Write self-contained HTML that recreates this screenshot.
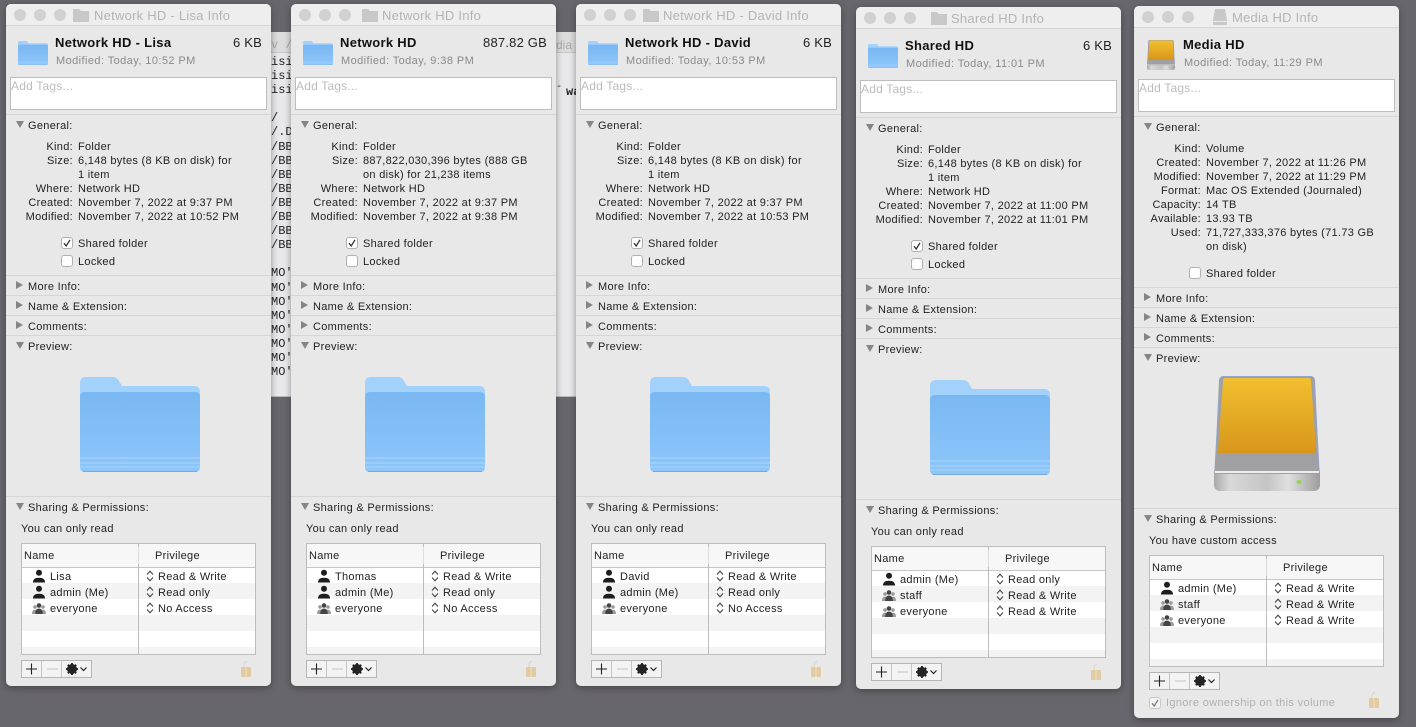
<!DOCTYPE html>
<html><head><meta charset="utf-8"><style>
html,body{margin:0;padding:0}
body{width:1416px;height:727px;overflow:hidden;position:relative;background:#67666c;font-family:"Liberation Sans",sans-serif;color:#222;filter:blur(.3px)}
.w{position:absolute;width:265px;background:#e9e8e9;border-radius:5px;box-shadow:0 2px 7px rgba(30,30,35,.45)}
.bar{position:absolute;left:0;top:0;width:265px;height:21px;background:#eeeeee;border-bottom:1px solid #d5d5d5;border-radius:5px 5px 0 0}
.d{position:absolute;top:5px;width:12px;height:12px;border-radius:50%;background:#d1d1d1}
.t{position:absolute;line-height:14px;font-size:11px;white-space:nowrap;letter-spacing:.3px;margin-top:1px}
.ti{font-size:13px;color:#b4b4b4;top:4px;letter-spacing:.25px}
.n{font-size:13px;font-weight:bold;color:#111;left:49px;top:31px;letter-spacing:.3px}
.s{font-size:13px;color:#222;right:9px;top:31px;letter-spacing:.2px}
.m{color:#8a8a8a;left:50px;top:49px;letter-spacing:.42px}
.tg{position:absolute;left:4px;top:73px;width:255px;height:31px;background:#fff;border:1px solid #bdbdbd}
.at{font-size:12px;color:#bcbcbc;left:5px;letter-spacing:.2px}
.l{left:0;width:67px;text-align:right}
.v{left:72px}
.h{left:22px}
.hr{position:absolute;left:0;width:265px;height:1px;background:#d6d6d6}
.c{position:absolute;left:55px;width:10px;height:10px;background:#fff;border:1px solid #b0b0b0;border-radius:3px}
.c svg{position:absolute;left:1px;top:1px}
.dn,.rt{position:absolute;width:0;height:0}
.dn{left:10px;border-left:4.5px solid transparent;border-right:4.5px solid transparent;border-top:7px solid #858585}
.rt{left:10px;border-top:4.5px solid transparent;border-bottom:4.5px solid transparent;border-left:7px solid #858585}
.tb{position:absolute;left:15px;width:233px;height:110px;border:1px solid #bdbdbd;background:repeating-linear-gradient(#fff 0,#fff 16px,#f3f3f3 16px,#f3f3f3 32px) 0 23px no-repeat;background-size:100% 87px;overflow:hidden}
.th{position:absolute;left:0;top:0;width:233px;height:23px;background:#f7f7f7;border-bottom:1px solid #c6c6c6}
.cd{position:absolute;left:116px;top:0;width:1px;height:110px;background:#bdbdbd}
.cd2{position:absolute;left:116px;top:3px;width:1px;height:17px;background:#ddd}
.tb svg{position:absolute}
.bt{position:absolute;left:15px;width:69px;height:16px;border:1px solid #b5b5b5;background:#f3f3f3}
.bt i{position:absolute;top:0;width:1px;height:16px;background:#c4c4c4}
.bt svg{position:absolute;left:0;top:0}
.lk{position:absolute;left:234px}
.mo{position:absolute;font-family:"Liberation Mono",monospace;font-size:12px;line-height:14.1px;color:#222;white-space:pre}
svg{display:block;overflow:visible}
</style></head><body>
<svg width="0" height="0" style="position:absolute"><defs>
<linearGradient id="fg" x1="0" y1="0" x2="0" y2="1"><stop offset="0" stop-color="#7ab8f2"/><stop offset="1" stop-color="#8dc6fb"/></linearGradient>
<linearGradient id="yg" x1="0" y1="0" x2="0" y2="1"><stop offset="0" stop-color="#f1bf2f"/><stop offset="1" stop-color="#d8961b"/></linearGradient>
<linearGradient id="sg" x1="0" y1="0" x2="1" y2="0"><stop offset="0" stop-color="#a9a9a9"/><stop offset=".15" stop-color="#d9d9d9"/><stop offset=".5" stop-color="#c4c4c4"/><stop offset=".7" stop-color="#dfdfdf"/><stop offset="1" stop-color="#9d9d9d"/></linearGradient>
<symbol id="folder" viewBox="0 0 120 95" preserveAspectRatio="none">
<path d="M0 6Q0 0 6 0H33Q37 0 39 4L42 9H114Q120 9 120 15V30H0Z" fill="#a2d1fc"/>
<path d="M0 20Q0 15 5 15H115Q120 15 120 20V90Q120 95 115 95H5Q0 95 0 90Z" fill="url(#fg)"/>
<path d="M0 81H120M0 86H120M0 90H120" stroke="#a4d2fb" stroke-width="1.2"/>
<path d="M3 94.5H117" stroke="#7aa9d4" stroke-width="1"/>
</symbol>
<symbol id="drive" viewBox="0 0 106 116" preserveAspectRatio="none">
<path d="M9 0H97Q100 0 101 4L105 90Q106 96 106 98V108Q106 115 99 115H7Q0 115 0 108V98Q0 96 1 90L5 4Q6 0 9 0Z" fill="#a0a0a2"/>
<path d="M10 .5H96Q99 .5 100 4L105 93M10 .5Q7 .5 6 4L1 93" fill="none" stroke="#93a5c8" stroke-width="1"/>
<path d="M11 2H95Q97 2 97 5L102 74Q102 77 99 77H6Q3 77 4 74L9 5Q9 2 11 2Z" fill="url(#yg)"/>
<path d="M0 96Q1 98 5 98H101Q105 98 106 96V108Q106 115 99 115H7Q0 115 0 108Z" fill="url(#sg)"/>
<path d="M1 96H105" stroke="#eeeeee" stroke-width="2"/>
<ellipse cx="85" cy="106" rx="2.5" ry="2" fill="#8fd64f"/>
</symbol>
<symbol id="p" viewBox="0 0 14 14"><circle cx="7" cy="3.8" r="3" fill="#1e1e1e"/><path d="M1 13.5Q1 8.8 7 8.8Q13 8.8 13 13.5Z" fill="#1e1e1e"/></symbol>
<symbol id="g" viewBox="0 0 14 14"><circle cx="3" cy="6" r="1.8" fill="#9a9a9a"/><circle cx="11" cy="6" r="1.8" fill="#9a9a9a"/><path d="M0 13Q0 8.6 3 8.6Q6 8.6 6 13ZM8 13Q8 8.6 11 8.6Q14 8.6 14 13Z" fill="#9a9a9a"/><circle cx="7" cy="4.5" r="2.3" fill="#444"/><path d="M3.2 13Q3.2 7.5 7 7.5Q10.8 7.5 10.8 13Z" fill="#444"/></symbol>
<symbol id="st" viewBox="0 0 8 12"><path d="M1 4.5L4 1.2L7 4.5M1 7.5L4 10.8L7 7.5" fill="none" stroke="#444" stroke-width="1.1"/></symbol>
<symbol id="btn" viewBox="0 0 70 16">
<path d="M4 8H15M9.5 2.5V13.5" stroke="#222" stroke-width="1.1"/><path d="M25 8H36" stroke="#c9c9c9" stroke-width="1.1"/>
<circle cx="50" cy="8" r="3.8" fill="none" stroke="#222" stroke-width="2.4"/>
<path d="M50 2V14M44 8H56M45.8 3.8L54.2 12.2M54.2 3.8L45.8 12.2" stroke="#222" stroke-width="1.8"/>
<path d="M58.5 6.5L61.5 9.5L64.5 6.5" fill="none" stroke="#222" stroke-width="1.2"/>
</symbol>
<symbol id="lock" viewBox="0 0 13 18"><path d="M4 7V4.5Q4 2 7 1.5" fill="none" stroke="#d9d4cc" stroke-width="1"/><rect x="1" y="7" width="10" height="10" rx="1" fill="#e2cba3"/><rect x="5.5" y="7" width="1" height="10" fill="#efe0c3"/></symbol>
<symbol id="ck" viewBox="0 0 8 8"><path d="M1 4.2L3.2 7L7 .8" fill="none" stroke="#333" stroke-width="1.3"/></symbol>
</defs></svg>

<div style="position:absolute;left:262px;top:32px;width:320px;height:365px;background:#e8e8ea;border:1px solid #bbb;box-sizing:border-box"></div>
<div style="position:absolute;left:262px;top:32px;width:320px;height:21px;background:#dcdcdd;border-bottom:1px solid #c8c8c8;box-sizing:border-box"></div>
<div class="mo" style="left:271px;top:38px;color:#aaa;overflow:hidden;width:20px">v /V</div>
<div class="mo" style="left:556px;top:38px;color:#aaa;overflow:hidden;width:20px;font-family:'Liberation Sans',sans-serif">dia</div>
<div class="mo" style="left:271px;top:55px;overflow:hidden;width:20px">isi
isi
isi

/
/.D
/BB
/BB
/BB
/BB
/BB
/BB
/BB
/BB

MO'
MO'
MO'
MO'
MO'
MO'
MO'
MO'</div>
<div class="mo" style="left:556px;top:81px;font-size:10px">-</div>
<div class="mo" style="left:566px;top:85px;overflow:hidden;width:10px;font-weight:bold">wa</div>

<!-- Window 1 -->
<div class="w" style="left:6px;top:4px;height:682px">
<div class="bar"></div><div class="d" style="left:8px"></div><div class="d" style="left:28px"></div><div class="d" style="left:48px"></div>
<svg style="position:absolute;left:67px;top:4px" width="16" height="14"><path d="M0 1H6L8 3H16V14H0Z" fill="#c8c8c8"/></svg>
<div class="t ti" style="left:88px">Network HD - Lisa Info</div>
<svg style="position:absolute;left:12px;top:37px" width="30" height="24"><use href="#folder" width="30" height="24"/></svg>
<div class="t n">Network HD - Lisa</div><div class="t s">6 KB</div><div class="t m">Modified: Today, 10:52 PM</div>
<div class="tg"></div><div class="t at" style="top:74px">Add Tags...</div>
<div class="hr" style="top:110px"></div><div class="dn" style="top:117px"></div><div class="t h" style="top:114px">General:</div>
<div class="t l" style="top:135px">Kind:</div><div class="t v" style="top:135px">Folder</div>
<div class="t l" style="top:149px">Size:</div><div class="t v" style="top:149px">6,148 bytes (8 KB on disk) for</div><div class="t v" style="top:163px">1 item</div>
<div class="t l" style="top:177px">Where:</div><div class="t v" style="top:177px">Network HD</div>
<div class="t l" style="top:191px">Created:</div><div class="t v" style="top:191px">November 7, 2022 at 9:37 PM</div>
<div class="t l" style="top:205px">Modified:</div><div class="t v" style="top:205px">November 7, 2022 at 10:52 PM</div>
<div class="c" style="top:233px"><svg width="8" height="8"><use href="#ck" width="8" height="8"/></svg></div><div class="t v" style="top:232px">Shared folder</div>
<div class="c" style="top:251px"></div><div class="t v" style="top:250px">Locked</div>
<div class="hr" style="top:271px"></div><div class="rt" style="top:277px"></div><div class="t h" style="top:275px">More Info:</div>
<div class="hr" style="top:291px"></div><div class="rt" style="top:297px"></div><div class="t h" style="top:295px">Name &amp; Extension:</div>
<div class="hr" style="top:311px"></div><div class="rt" style="top:317px"></div><div class="t h" style="top:315px">Comments:</div>
<div class="hr" style="top:331px"></div><div class="dn" style="top:338px"></div><div class="t h" style="top:335px">Preview:</div>
<svg style="position:absolute;left:74px;top:373px" width="120" height="95"><use href="#folder" width="120" height="95"/></svg>
<div class="hr" style="top:492px"></div><div class="dn" style="top:499px"></div><div class="t h" style="top:496px">Sharing &amp; Permissions:</div>
<div class="t" style="left:15px;top:517px">You can only read</div>
<div class="tb" style="top:539px"><div class="th"></div><div class="cd"></div><div class="cd2"></div>
<div class="t" style="left:2px;top:4px">Name</div><div class="t" style="left:133px;top:4px">Privilege</div>
<svg style="left:10px;top:25px" width="14" height="14"><use href="#p" width="14" height="14"/></svg><div class="t" style="left:28px;top:25px">Lisa</div><svg style="left:124px;top:26px" width="8" height="12"><use href="#st" width="8" height="12"/></svg><div class="t" style="left:136px;top:25px">Read &amp; Write</div>
<svg style="left:10px;top:41px" width="14" height="14"><use href="#p" width="14" height="14"/></svg><div class="t" style="left:28px;top:41px">admin (Me)</div><svg style="left:124px;top:42px" width="8" height="12"><use href="#st" width="8" height="12"/></svg><div class="t" style="left:136px;top:41px">Read only</div>
<svg style="left:10px;top:57px" width="14" height="14"><use href="#g" width="14" height="14"/></svg><div class="t" style="left:28px;top:57px">everyone</div><svg style="left:124px;top:58px" width="8" height="12"><use href="#st" width="8" height="12"/></svg><div class="t" style="left:136px;top:57px">No Access</div>
</div>
<div class="bt" style="top:656px"><i style="left:19px"></i><i style="left:39px"></i><svg width="70" height="16"><use href="#btn" width="70" height="16"/></svg></div>
<svg class="lk" style="top:656px" width="13" height="18"><use href="#lock" width="13" height="18"/></svg>
</div>

<!-- Window 2 -->
<div class="w" style="left:291px;top:4px;height:682px">
<div class="bar"></div><div class="d" style="left:8px"></div><div class="d" style="left:28px"></div><div class="d" style="left:48px"></div>
<svg style="position:absolute;left:71px;top:4px" width="16" height="14"><path d="M0 1H6L8 3H16V14H0Z" fill="#c8c8c8"/></svg>
<div class="t ti" style="left:91px">Network HD Info</div>
<svg style="position:absolute;left:12px;top:37px" width="30" height="24"><use href="#folder" width="30" height="24"/></svg>
<div class="t n">Network HD</div><div class="t s">887.82 GB</div><div class="t m">Modified: Today, 9:38 PM</div>
<div class="tg"></div><div class="t at" style="top:74px">Add Tags...</div>
<div class="hr" style="top:110px"></div><div class="dn" style="top:117px"></div><div class="t h" style="top:114px">General:</div>
<div class="t l" style="top:135px">Kind:</div><div class="t v" style="top:135px">Folder</div>
<div class="t l" style="top:149px">Size:</div><div class="t v" style="top:149px">887,822,030,396 bytes (888 GB</div><div class="t v" style="top:163px">on disk) for 21,238 items</div>
<div class="t l" style="top:177px">Where:</div><div class="t v" style="top:177px">Network HD</div>
<div class="t l" style="top:191px">Created:</div><div class="t v" style="top:191px">November 7, 2022 at 9:37 PM</div>
<div class="t l" style="top:205px">Modified:</div><div class="t v" style="top:205px">November 7, 2022 at 9:38 PM</div>
<div class="c" style="top:233px"><svg width="8" height="8"><use href="#ck" width="8" height="8"/></svg></div><div class="t v" style="top:232px">Shared folder</div>
<div class="c" style="top:251px"></div><div class="t v" style="top:250px">Locked</div>
<div class="hr" style="top:271px"></div><div class="rt" style="top:277px"></div><div class="t h" style="top:275px">More Info:</div>
<div class="hr" style="top:291px"></div><div class="rt" style="top:297px"></div><div class="t h" style="top:295px">Name &amp; Extension:</div>
<div class="hr" style="top:311px"></div><div class="rt" style="top:317px"></div><div class="t h" style="top:315px">Comments:</div>
<div class="hr" style="top:331px"></div><div class="dn" style="top:338px"></div><div class="t h" style="top:335px">Preview:</div>
<svg style="position:absolute;left:74px;top:373px" width="120" height="95"><use href="#folder" width="120" height="95"/></svg>
<div class="hr" style="top:492px"></div><div class="dn" style="top:499px"></div><div class="t h" style="top:496px">Sharing &amp; Permissions:</div>
<div class="t" style="left:15px;top:517px">You can only read</div>
<div class="tb" style="top:539px"><div class="th"></div><div class="cd"></div><div class="cd2"></div>
<div class="t" style="left:2px;top:4px">Name</div><div class="t" style="left:133px;top:4px">Privilege</div>
<svg style="left:10px;top:25px" width="14" height="14"><use href="#p" width="14" height="14"/></svg><div class="t" style="left:28px;top:25px">Thomas</div><svg style="left:124px;top:26px" width="8" height="12"><use href="#st" width="8" height="12"/></svg><div class="t" style="left:136px;top:25px">Read &amp; Write</div>
<svg style="left:10px;top:41px" width="14" height="14"><use href="#p" width="14" height="14"/></svg><div class="t" style="left:28px;top:41px">admin (Me)</div><svg style="left:124px;top:42px" width="8" height="12"><use href="#st" width="8" height="12"/></svg><div class="t" style="left:136px;top:41px">Read only</div>
<svg style="left:10px;top:57px" width="14" height="14"><use href="#g" width="14" height="14"/></svg><div class="t" style="left:28px;top:57px">everyone</div><svg style="left:124px;top:58px" width="8" height="12"><use href="#st" width="8" height="12"/></svg><div class="t" style="left:136px;top:57px">No Access</div>
</div>
<div class="bt" style="top:656px"><i style="left:19px"></i><i style="left:39px"></i><svg width="70" height="16"><use href="#btn" width="70" height="16"/></svg></div>
<svg class="lk" style="top:656px" width="13" height="18"><use href="#lock" width="13" height="18"/></svg>
</div>

<!-- Window 3 -->
<div class="w" style="left:576px;top:4px;height:682px">
<div class="bar"></div><div class="d" style="left:8px"></div><div class="d" style="left:28px"></div><div class="d" style="left:48px"></div>
<svg style="position:absolute;left:67px;top:4px" width="16" height="14"><path d="M0 1H6L8 3H16V14H0Z" fill="#c8c8c8"/></svg>
<div class="t ti" style="left:87px">Network HD - David Info</div>
<svg style="position:absolute;left:12px;top:37px" width="30" height="24"><use href="#folder" width="30" height="24"/></svg>
<div class="t n">Network HD - David</div><div class="t s">6 KB</div><div class="t m">Modified: Today, 10:53 PM</div>
<div class="tg"></div><div class="t at" style="top:74px">Add Tags...</div>
<div class="hr" style="top:110px"></div><div class="dn" style="top:117px"></div><div class="t h" style="top:114px">General:</div>
<div class="t l" style="top:135px">Kind:</div><div class="t v" style="top:135px">Folder</div>
<div class="t l" style="top:149px">Size:</div><div class="t v" style="top:149px">6,148 bytes (8 KB on disk) for</div><div class="t v" style="top:163px">1 item</div>
<div class="t l" style="top:177px">Where:</div><div class="t v" style="top:177px">Network HD</div>
<div class="t l" style="top:191px">Created:</div><div class="t v" style="top:191px">November 7, 2022 at 9:37 PM</div>
<div class="t l" style="top:205px">Modified:</div><div class="t v" style="top:205px">November 7, 2022 at 10:53 PM</div>
<div class="c" style="top:233px"><svg width="8" height="8"><use href="#ck" width="8" height="8"/></svg></div><div class="t v" style="top:232px">Shared folder</div>
<div class="c" style="top:251px"></div><div class="t v" style="top:250px">Locked</div>
<div class="hr" style="top:271px"></div><div class="rt" style="top:277px"></div><div class="t h" style="top:275px">More Info:</div>
<div class="hr" style="top:291px"></div><div class="rt" style="top:297px"></div><div class="t h" style="top:295px">Name &amp; Extension:</div>
<div class="hr" style="top:311px"></div><div class="rt" style="top:317px"></div><div class="t h" style="top:315px">Comments:</div>
<div class="hr" style="top:331px"></div><div class="dn" style="top:338px"></div><div class="t h" style="top:335px">Preview:</div>
<svg style="position:absolute;left:74px;top:373px" width="120" height="95"><use href="#folder" width="120" height="95"/></svg>
<div class="hr" style="top:492px"></div><div class="dn" style="top:499px"></div><div class="t h" style="top:496px">Sharing &amp; Permissions:</div>
<div class="t" style="left:15px;top:517px">You can only read</div>
<div class="tb" style="top:539px"><div class="th"></div><div class="cd"></div><div class="cd2"></div>
<div class="t" style="left:2px;top:4px">Name</div><div class="t" style="left:133px;top:4px">Privilege</div>
<svg style="left:10px;top:25px" width="14" height="14"><use href="#p" width="14" height="14"/></svg><div class="t" style="left:28px;top:25px">David</div><svg style="left:124px;top:26px" width="8" height="12"><use href="#st" width="8" height="12"/></svg><div class="t" style="left:136px;top:25px">Read &amp; Write</div>
<svg style="left:10px;top:41px" width="14" height="14"><use href="#p" width="14" height="14"/></svg><div class="t" style="left:28px;top:41px">admin (Me)</div><svg style="left:124px;top:42px" width="8" height="12"><use href="#st" width="8" height="12"/></svg><div class="t" style="left:136px;top:41px">Read only</div>
<svg style="left:10px;top:57px" width="14" height="14"><use href="#g" width="14" height="14"/></svg><div class="t" style="left:28px;top:57px">everyone</div><svg style="left:124px;top:58px" width="8" height="12"><use href="#st" width="8" height="12"/></svg><div class="t" style="left:136px;top:57px">No Access</div>
</div>
<div class="bt" style="top:656px"><i style="left:19px"></i><i style="left:39px"></i><svg width="70" height="16"><use href="#btn" width="70" height="16"/></svg></div>
<svg class="lk" style="top:656px" width="13" height="18"><use href="#lock" width="13" height="18"/></svg>
</div>

<!-- Window 4 -->
<div class="w" style="left:856px;top:7px;height:682px">
<div class="bar"></div><div class="d" style="left:8px"></div><div class="d" style="left:28px"></div><div class="d" style="left:48px"></div>
<svg style="position:absolute;left:75px;top:4px" width="16" height="14"><path d="M0 1H6L8 3H16V14H0Z" fill="#c8c8c8"/></svg>
<div class="t ti" style="left:95px">Shared HD Info</div>
<svg style="position:absolute;left:12px;top:37px" width="30" height="24"><use href="#folder" width="30" height="24"/></svg>
<div class="t n">Shared HD</div><div class="t s">6 KB</div><div class="t m">Modified: Today, 11:01 PM</div>
<div class="tg"></div><div class="t at" style="top:74px">Add Tags...</div>
<div class="hr" style="top:110px"></div><div class="dn" style="top:117px"></div><div class="t h" style="top:114px">General:</div>
<div class="t l" style="top:135px">Kind:</div><div class="t v" style="top:135px">Folder</div>
<div class="t l" style="top:149px">Size:</div><div class="t v" style="top:149px">6,148 bytes (8 KB on disk) for</div><div class="t v" style="top:163px">1 item</div>
<div class="t l" style="top:177px">Where:</div><div class="t v" style="top:177px">Network HD</div>
<div class="t l" style="top:191px">Created:</div><div class="t v" style="top:191px">November 7, 2022 at 11:00 PM</div>
<div class="t l" style="top:205px">Modified:</div><div class="t v" style="top:205px">November 7, 2022 at 11:01 PM</div>
<div class="c" style="top:233px"><svg width="8" height="8"><use href="#ck" width="8" height="8"/></svg></div><div class="t v" style="top:232px">Shared folder</div>
<div class="c" style="top:251px"></div><div class="t v" style="top:250px">Locked</div>
<div class="hr" style="top:271px"></div><div class="rt" style="top:277px"></div><div class="t h" style="top:275px">More Info:</div>
<div class="hr" style="top:291px"></div><div class="rt" style="top:297px"></div><div class="t h" style="top:295px">Name &amp; Extension:</div>
<div class="hr" style="top:311px"></div><div class="rt" style="top:317px"></div><div class="t h" style="top:315px">Comments:</div>
<div class="hr" style="top:331px"></div><div class="dn" style="top:338px"></div><div class="t h" style="top:335px">Preview:</div>
<svg style="position:absolute;left:74px;top:373px" width="120" height="95"><use href="#folder" width="120" height="95"/></svg>
<div class="hr" style="top:492px"></div><div class="dn" style="top:499px"></div><div class="t h" style="top:496px">Sharing &amp; Permissions:</div>
<div class="t" style="left:15px;top:517px">You can only read</div>
<div class="tb" style="top:539px"><div class="th"></div><div class="cd"></div><div class="cd2"></div>
<div class="t" style="left:2px;top:4px">Name</div><div class="t" style="left:133px;top:4px">Privilege</div>
<svg style="left:10px;top:25px" width="14" height="14"><use href="#p" width="14" height="14"/></svg><div class="t" style="left:28px;top:25px">admin (Me)</div><svg style="left:124px;top:26px" width="8" height="12"><use href="#st" width="8" height="12"/></svg><div class="t" style="left:136px;top:25px">Read only</div>
<svg style="left:10px;top:41px" width="14" height="14"><use href="#g" width="14" height="14"/></svg><div class="t" style="left:28px;top:41px">staff</div><svg style="left:124px;top:42px" width="8" height="12"><use href="#st" width="8" height="12"/></svg><div class="t" style="left:136px;top:41px">Read &amp; Write</div>
<svg style="left:10px;top:57px" width="14" height="14"><use href="#g" width="14" height="14"/></svg><div class="t" style="left:28px;top:57px">everyone</div><svg style="left:124px;top:58px" width="8" height="12"><use href="#st" width="8" height="12"/></svg><div class="t" style="left:136px;top:57px">Read &amp; Write</div>
</div>
<div class="bt" style="top:656px"><i style="left:19px"></i><i style="left:39px"></i><svg width="70" height="16"><use href="#btn" width="70" height="16"/></svg></div>
<svg class="lk" style="top:656px" width="13" height="18"><use href="#lock" width="13" height="18"/></svg>
</div>

<!-- Window 5 -->
<div class="w" style="left:1134px;top:6px;height:712px">
<div class="bar"></div><div class="d" style="left:8px"></div><div class="d" style="left:28px"></div><div class="d" style="left:48px"></div>
<svg style="position:absolute;left:79px;top:3px" width="14" height="16"><path d="M2 0H12L14 11V16H0V11Z" fill="#c8c8c8"/><rect x="0" y="12" width="14" height="1" fill="#e8e8e8"/></svg>
<div class="t ti" style="left:98px">Media HD Info</div>
<svg style="position:absolute;left:13px;top:34px" width="28" height="30"><use href="#drive" width="28" height="30"/></svg>
<div class="t n">Media HD</div><div class="t m">Modified: Today, 11:29 PM</div>
<div class="tg"></div><div class="t at" style="top:74px">Add Tags...</div>
<div class="hr" style="top:110px"></div><div class="dn" style="top:117px"></div><div class="t h" style="top:114px">General:</div>
<div class="t l" style="top:135px">Kind:</div><div class="t v" style="top:135px">Volume</div>
<div class="t l" style="top:149px">Created:</div><div class="t v" style="top:149px">November 7, 2022 at 11:26 PM</div>
<div class="t l" style="top:163px">Modified:</div><div class="t v" style="top:163px">November 7, 2022 at 11:29 PM</div>
<div class="t l" style="top:177px">Format:</div><div class="t v" style="top:177px">Mac OS Extended (Journaled)</div>
<div class="t l" style="top:191px">Capacity:</div><div class="t v" style="top:191px">14 TB</div>
<div class="t l" style="top:205px">Available:</div><div class="t v" style="top:205px">13.93 TB</div>
<div class="t l" style="top:219px">Used:</div><div class="t v" style="top:219px">71,727,333,376 bytes (71.73 GB</div><div class="t v" style="top:233px">on disk)</div>
<div class="c" style="top:261px"></div><div class="t v" style="top:260px">Shared folder</div>
<div class="hr" style="top:281px"></div><div class="rt" style="top:287px"></div><div class="t h" style="top:285px">More Info:</div>
<div class="hr" style="top:301px"></div><div class="rt" style="top:307px"></div><div class="t h" style="top:305px">Name &amp; Extension:</div>
<div class="hr" style="top:321px"></div><div class="rt" style="top:327px"></div><div class="t h" style="top:325px">Comments:</div>
<div class="hr" style="top:341px"></div><div class="dn" style="top:348px"></div><div class="t h" style="top:345px">Preview:</div>
<svg style="position:absolute;left:80px;top:370px" width="106" height="116"><use href="#drive" width="106" height="116"/></svg>
<div class="hr" style="top:502px"></div><div class="dn" style="top:509px"></div><div class="t h" style="top:506px">Sharing &amp; Permissions:</div>
<div class="t" style="left:15px;top:527px">You have custom access</div>
<div class="tb" style="top:549px"><div class="th"></div><div class="cd"></div><div class="cd2"></div>
<div class="t" style="left:2px;top:4px">Name</div><div class="t" style="left:133px;top:4px">Privilege</div>
<svg style="left:10px;top:25px" width="14" height="14"><use href="#p" width="14" height="14"/></svg><div class="t" style="left:28px;top:25px">admin (Me)</div><svg style="left:124px;top:26px" width="8" height="12"><use href="#st" width="8" height="12"/></svg><div class="t" style="left:136px;top:25px">Read &amp; Write</div>
<svg style="left:10px;top:41px" width="14" height="14"><use href="#g" width="14" height="14"/></svg><div class="t" style="left:28px;top:41px">staff</div><svg style="left:124px;top:42px" width="8" height="12"><use href="#st" width="8" height="12"/></svg><div class="t" style="left:136px;top:41px">Read &amp; Write</div>
<svg style="left:10px;top:57px" width="14" height="14"><use href="#g" width="14" height="14"/></svg><div class="t" style="left:28px;top:57px">everyone</div><svg style="left:124px;top:58px" width="8" height="12"><use href="#st" width="8" height="12"/></svg><div class="t" style="left:136px;top:57px">Read &amp; Write</div>
</div>
<div class="bt" style="top:666px"><i style="left:19px"></i><i style="left:39px"></i><svg width="70" height="16"><use href="#btn" width="70" height="16"/></svg></div>
<div class="c" style="left:15px;top:691px;opacity:.6"><svg width="8" height="8"><use href="#ck" width="8" height="8"/></svg></div>
<div class="t" style="left:32px;top:689px;color:#b0b0b0;letter-spacing:.35px">Ignore ownership on this volume</div>
<svg class="lk" style="top:685px" width="13" height="18"><use href="#lock" width="13" height="18"/></svg>
</div>
</body></html>
